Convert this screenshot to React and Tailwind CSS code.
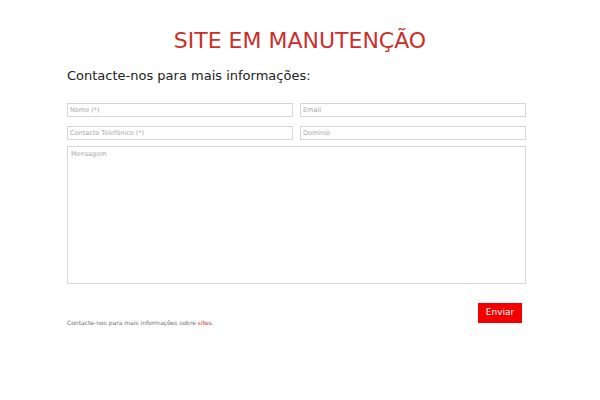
export default function App() {
  const font = { fontFamily: '"DejaVu Sans", Verdana, sans-serif' };
  return (
    <div className="w-[600px] h-[400px] bg-white" style={font}>
      <div className="pt-[28px] text-center text-[22px] leading-[26px] text-[#c9302c]">
        SITE EM MANUTENÇÃO
      </div>
      <div className="ml-[67px] w-[459px]">
        <div className="mt-[13px] text-[13px] leading-[18px] text-[#222]">
          Contacte-nos para mais informações:
        </div>
        <div className="mt-[18px] grid grid-cols-2 gap-x-[7px] gap-y-[9px]">
          <input
            className="h-[14px] border border-[#d6d6d6] px-[2px] text-[6.5px] leading-[12px] outline-none placeholder:text-[#a8a8a8]"
            placeholder="Nome (*)"
          />
          <input
            className="h-[14px] border border-[#d6d6d6] px-[2px] text-[6.5px] leading-[12px] outline-none placeholder:text-[#a8a8a8]"
            placeholder="Email"
          />
          <input
            className="h-[14px] border border-[#d6d6d6] px-[2px] text-[6.5px] leading-[12px] outline-none placeholder:text-[#a8a8a8]"
            placeholder="Contacto Telefónico (*)"
          />
          <input
            className="h-[14px] border border-[#d6d6d6] px-[2px] text-[6.5px] leading-[12px] outline-none placeholder:text-[#a8a8a8]"
            placeholder="Domínio"
          />
        </div>
        <textarea
          className="mt-[6px] block h-[138px] w-full resize-none border border-[#d6d6d6] px-[3px] py-[2px] text-[6.5px] leading-[10px] outline-none placeholder:text-[#a8a8a8]"
          placeholder="Mensagem"
        />
        <div className="mt-[19px] flex items-end justify-between pr-[4px]">
          <div className="mb-[-5px] text-[6px] leading-[10px] text-[#6f6f6f]">
            Contacte-nos para mais informações sobre <span className="text-[#c9302c]">sites</span>.
          </div>
          <button className="h-[20px] w-[44px] bg-[#f20000] text-[9px] text-white">
            Enviar
          </button>
        </div>
      </div>
    </div>
  );
}
